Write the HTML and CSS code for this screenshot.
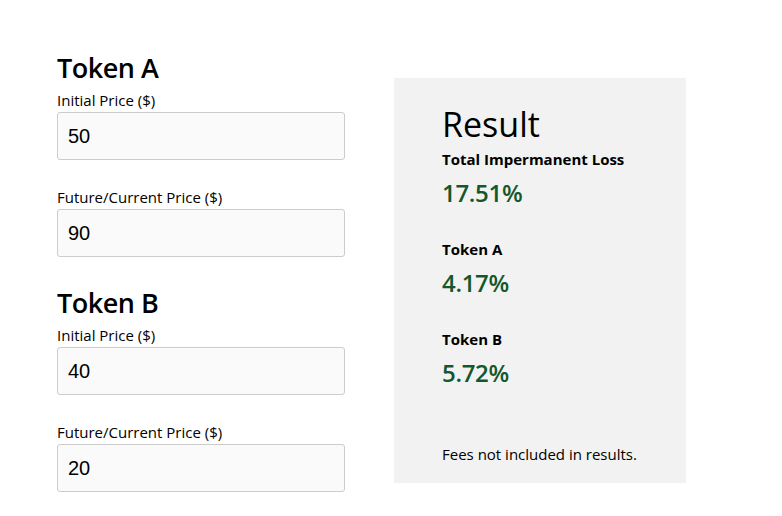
FILE: index.html
```html
<!DOCTYPE html>
<html>
<head>
<meta charset="utf-8">
<link rel="stylesheet" href="styles.css">
</head>
<body>
<div class="page">
  <div class="inputs">
    <section class="token">
      <h2 class="token-title">Token A</h2>
      <label class="field-label">Initial Price ($)</label>
      <input class="field" type="text" value="50">
      <label class="field-label">Future/Current Price ($)</label>
      <input class="field" type="text" value="90">
    </section>
    <section class="token">
      <h2 class="token-title">Token B</h2>
      <label class="field-label">Initial Price ($)</label>
      <input class="field" type="text" value="40">
      <label class="field-label">Future/Current Price ($)</label>
      <input class="field" type="text" value="20">
    </section>
  </div>
  <div class="result">
    <h1 class="result-title">Result</h1>
    <div class="metric">
      <div class="metric-label">Total Impermanent Loss</div>
      <div class="metric-value">17.51%</div>
    </div>
    <div class="metric">
      <div class="metric-label">Token A</div>
      <div class="metric-value">4.17%</div>
    </div>
    <div class="metric">
      <div class="metric-label">Token B</div>
      <div class="metric-value">5.72%</div>
    </div>
    <p class="note">Fees not included in results.</p>
  </div>
</div>
</body>
</html>
```

FILE: styles.css
```css
html, body {
  margin: 0;
  padding: 0;
  background: #ffffff;
}
body {
  font-family: "Open Sans", "Noto Sans", sans-serif;
  color: #000;
}
.page {
  display: flex;
  align-items: flex-start;
  gap: 49px;
  padding: 50px 0 0 57px;
}
.inputs {
  width: 288px;
  display: flex;
  flex-direction: column;
  gap: 28px;
}
.token {
  display: flex;
  flex-direction: column;
}
.token-title {
  margin: 0 0 4px 0;
  font-size: 27px;
  font-weight: 600;
  line-height: 36px;
  letter-spacing: -0.5px;
}
.field-label {
  display: block;
  font-size: 15px;
  line-height: 20px;
  margin-bottom: 2px;
}
.field {
  box-sizing: border-box;
  width: 288px;
  height: 48px;
  border: 1px solid #cccccc;
  border-radius: 3px;
  background: #fafafa;
  padding: 0 10px;
  font-family: "Liberation Sans", Arial, sans-serif;
  font-size: 20px;
  color: #000;
  margin: 0 0 27px 0;
  outline: none;
}
.token .field:last-child {
  margin-bottom: 0;
}
.result {
  box-sizing: border-box;
  width: 292px;
  height: 405px;
  margin-top: 28px;
  background: #f2f2f2;
  padding: 24px 20px 0 48px;
  display: flex;
  flex-direction: column;
}
.result-title {
  margin: 0 0 3px 0;
  font-size: 34px;
  font-weight: 400;
  line-height: 44px;
}
.metric {
  margin-bottom: 28px;
}
.metric-label {
  font-size: 15px;
  font-weight: 700;
  line-height: 20px;
}
.metric-value {
  margin-top: 6px;
  font-size: 24px;
  font-weight: 600;
  line-height: 36px;
  letter-spacing: -0.3px;
  color: #12582c;
}
.note {
  margin: auto 0 19px 0;
  font-size: 15px;
  line-height: 20px;
}
```
